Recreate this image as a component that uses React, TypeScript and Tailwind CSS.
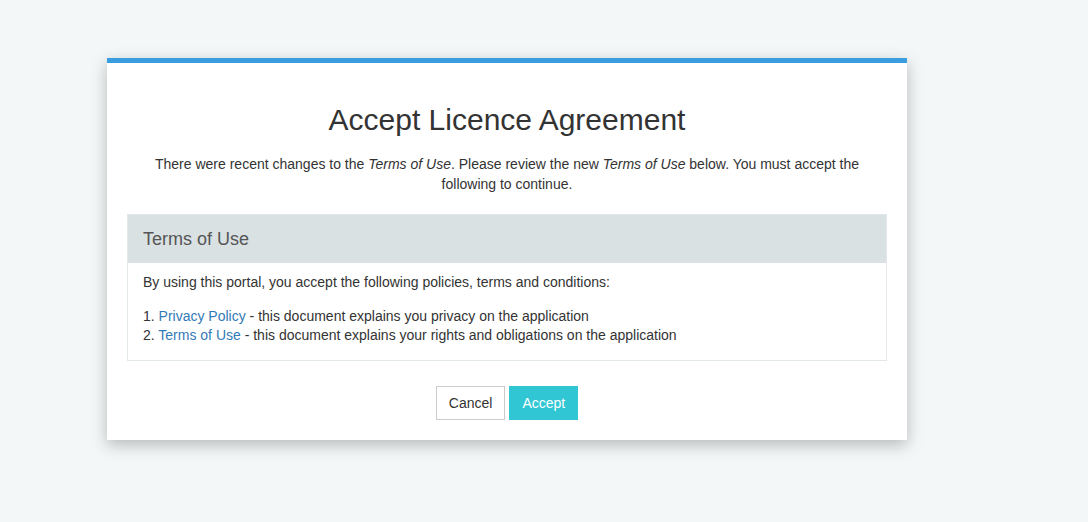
export default function App() {
  return (
    <div className="min-h-[522px] w-full bg-[#f4f7f8] pt-[58px] pl-[107px]" style={{ fontFamily: '"Liberation Sans", Arial, sans-serif' }}>
      <div className="w-[800px] bg-white border-t-[5px] border-[#3a9ddf] shadow-[0_5px_15px_rgba(0,0,0,0.25)] px-5 pb-[20px]">
        <h1 className="text-center text-[30px] leading-[34px] text-[#333] mt-[40px] mb-[17px]">Accept Licence Agreement</h1>
        <p className="text-center text-[14px] leading-[20px] text-[#333] px-6">
          There were recent changes to the <i>Terms of Use</i>. Please review the new <i>Terms of Use</i> below. You must accept the following to continue.
        </p>
        <div className="mt-[20px] border border-[#e2e7ea]">
          <div className="bg-[#dae1e3] h-[48px] flex items-center px-[15px] text-[18px] text-[#555]">Terms of Use</div>
          <div className="px-[15px] pt-[9px] pb-[15px] text-[14px] leading-[20px] text-[#333]">
            <p className="mb-[14px]">By using this portal, you accept the following policies, terms and conditions:</p>
            <div>1. <a className="text-[#337ab7]">Privacy Policy</a> - this document explains you privacy on the application</div>
            <div className="-mt-[1px]">2. <a className="text-[#337ab7]">Terms of Use</a> - this document explains your rights and obligations on the application</div>
          </div>
        </div>
        <div className="flex justify-center gap-[4px] mt-[25px]">
          <button className="h-[34px] px-[12px] border border-[#ccc] bg-white text-[14px] text-[#333]">Cancel</button>
          <button className="h-[34px] px-[13px] bg-[#31c6d4] text-[14px] text-white">Accept</button>
        </div>
      </div>
    </div>
  );
}
